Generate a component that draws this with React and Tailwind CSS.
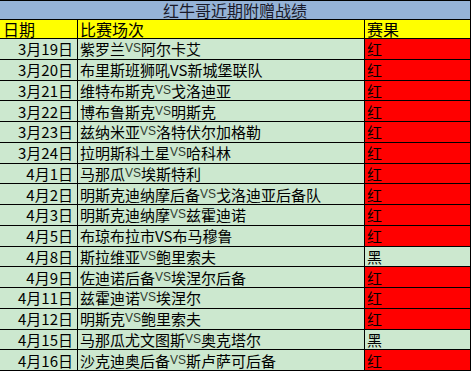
const rows = [
  ['3月19日', '紫罗兰', 'vs', '阿尔卡艾', '红'],
  ['3月20日', '布里斯班狮吼', 'VS', '新城堡联队', '红'],
  ['3月21日', '维特布斯克', 'vs', '戈洛迪亚', '红'],
  ['3月22日', '博布鲁斯克', 'vs', '明斯克', '红'],
  ['3月23日', '兹纳米亚', 'vs', '洛特伏尔加格勒', '红'],
  ['3月24日', '拉明斯科土星', 'vs', '哈科林', '红'],
  ['4月1日', '马那瓜', 'vs', '埃斯特利', '红'],
  ['4月2日', '明斯克迪纳摩后备', 'vs', '戈洛迪亚后备队', '红'],
  ['4月3日', '明斯克迪纳摩', 'vs', '兹霍迪诺', '红'],
  ['4月5日', '布琼布拉市', 'VS', '布马穆鲁', '红'],
  ['4月8日', '斯拉维亚', 'vs', '鲍里索夫', '黑'],
  ['4月9日', '佐迪诺后备', 'vs', '埃涅尔后备', '红'],
  ['4月11日', '兹霍迪诺', 'vs', '埃涅尔', '红'],
  ['4月12日', '明斯克', 'vs', '鲍里索夫', '红'],
  ['4月15日', '马那瓜尤文图斯', 'vs', '奥克塔尔', '黑'],
  ['4月16日', '沙克迪奥后备', 'vs', '斯卢萨可后备', '红'],
];

const font = { fontFamily: '"Noto Sans CJK SC", "DejaVu Sans", sans-serif' };

function Vs({ text }) {
  if (text === 'VS') return <span>VS</span>;
  return (
    <span className="text-[12px] uppercase text-[#2f3b2f]" style={{ fontFamily: '"Liberation Sans", sans-serif' }}>
      {text}
    </span>
  );
}

export default function App() {
  return (
    <div className="w-[471px] h-[371px] flex flex-col bg-[#cce8cf] border-t border-r border-black text-black text-[15px] leading-[19px]" style={font}>
      <div className="h-[19px] shrink-0 bg-[#95b3d7] border-b border-black flex items-center justify-center text-[16px] leading-[16px] text-[#1a1a2a]">
        红牛哥近期附赠战绩
      </div>
      <div className="h-[19px] shrink-0 bg-[#ffff00] border-b border-black flex text-[16px] leading-[16px]">
        <div className="w-[78px] border-r border-black flex items-center pl-[3px]">日期</div>
        <div className="w-[287px] border-r border-black flex items-center pl-[2px]">比赛场次</div>
        <div className="flex-1 flex items-center pl-[2px]">赛果</div>
      </div>
      {rows.map(([date, home, vs, away, res]) => (
        <div key={date} className="flex-1 flex border-b border-black">
          <div className="w-[78px] border-r border-black flex items-center justify-end pr-[4px]">{date}</div>
          <div className="w-[287px] border-r border-black flex items-center pl-[2px] whitespace-nowrap">
            {home}
            <Vs text={vs} />
            {away}
          </div>
          <div className={`flex-1 flex items-center pl-[2px] ${res === '红' ? 'bg-[#ff0000]' : ''}`}>{res}</div>
        </div>
      ))}
    </div>
  );
}
